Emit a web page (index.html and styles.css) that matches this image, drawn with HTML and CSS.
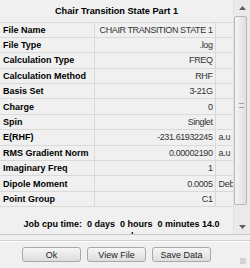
FILE: index.html
```html
<!DOCTYPE html>
<html lang="en">
<head>
    <meta charset="UTF-8" />
    <title>Chair Transition State Part 1</title>
    <link rel="stylesheet" href="styles.css">
</head>
<body>

    <div class="window">
        <!-- Scrolling summary area -->
        <div class="scroll-box">
            <div class="scroll-content">
                <table class="summary">
                    <colgroup>
                        <col class="col-key">
                        <col class="col-val">
                        <col class="col-unit">
                    </colgroup>
                    <tr class="title-row"><th colspan="3">Chair Transition State Part 1</th></tr>
                    <tr><td class="key">File Name</td><td class="val">CHAIR TRANSITION STATE 1</td><td class="unit"></td></tr>
                    <tr><td class="key">File Type</td><td class="val">.log</td><td class="unit"></td></tr>
                    <tr><td class="key">Calculation Type</td><td class="val">FREQ</td><td class="unit"></td></tr>
                    <tr><td class="key">Calculation Method</td><td class="val">RHF</td><td class="unit"></td></tr>
                    <tr><td class="key">Basis Set</td><td class="val">3-21G</td><td class="unit"></td></tr>
                    <tr><td class="key">Charge</td><td class="val">0</td><td class="unit"></td></tr>
                    <tr><td class="key">Spin</td><td class="val">Singlet</td><td class="unit"></td></tr>
                    <tr><td class="key">E(RHF)</td><td class="val">-231.61932245</td><td class="unit">a.u</td></tr>
                    <tr><td class="key">RMS Gradient Norm</td><td class="val">0.00002190</td><td class="unit">a.u</td></tr>
                    <tr><td class="key">Imaginary Freq</td><td class="val">1</td><td class="unit"></td></tr>
                    <tr><td class="key">Dipole Moment</td><td class="val">0.0005</td><td class="unit">Debye</td></tr>
                    <tr><td class="key">Point Group</td><td class="val">C1</td><td class="unit"></td></tr>
                </table>
                <p class="cpu-time">Job cpu time:&nbsp; 0 days&nbsp; 0 hours&nbsp; 0 minutes 14.0 seconds.</p>
            </div>

            <!-- Vertical scrollbar -->
            <div class="scrollbar">
                <div class="arrow">
                    <svg width="7" height="4" viewBox="0 0 7 4"><path d="M0 4 L3.5 0 L7 4 Z" fill="#606060"/></svg>
                </div>
                <div class="track"><div class="thumb"><span class="grip-lines"></span></div></div>
                <div class="arrow">
                    <svg width="7" height="4" viewBox="0 0 7 4"><path d="M0 0 L3.5 4 L7 0 Z" fill="#606060"/></svg>
                </div>
            </div>
        </div>

        <!-- Dialog buttons -->
        <div class="button-bar">
            <button>Ok</button>
            <button>View File</button>
            <button>Save Data</button>
        </div>
        <div class="size-grip"></div>
    </div>

</body>
</html>
```

FILE: styles.css
```css
* {
    margin: 0;
    padding: 0;
    box-sizing: border-box;
}

body {
    font-family: 'Liberation Sans', Arial, sans-serif;
    font-size: 9px;
    background: #f0f0f0;
    color: #000;
    width: 250px;
    height: 268px;
    overflow: hidden;
}

.window {
    position: relative;
    height: 268px;
    display: flex;
    flex-direction: column;
}

.scroll-box {
    display: flex;
    height: 235px;
    border-bottom: 1px solid #c8c8c8;
}

.scroll-content {
    width: 233px;
    overflow: hidden;
}

.summary {
    border-collapse: collapse;
    table-layout: fixed;
    width: 233px;
}

.col-key {
    width: 94px;
}

.col-val {
    width: 121px;
}

.col-unit {
    width: 18px;
}

.summary th {
    height: 22px;
    font-size: 9.2px;
    font-weight: bold;
    text-align: center;
    border-bottom: 1px solid #d9d9d9;
}

.summary td {
    height: 15.4px;
    border-bottom: 1px solid #d9d9d9;
    border-right: 1px solid #d9d9d9;
    white-space: nowrap;
    overflow: hidden;
}

.summary .key {
    padding-left: 3px;
    font-weight: bold;
}

.summary .val {
    padding-right: 2px;
    text-align: right;
    letter-spacing: -0.4px;
    color: #333;
}

.summary .unit {
    padding-left: 3px;
    letter-spacing: -0.2px;
    color: #333;
}

.cpu-time {
    margin-top: 11px;
    padding: 0 8px 0 18px;
    text-align: center;
    font-weight: bold;
    line-height: 12px;
}

.scrollbar {
    width: 17px;
    display: flex;
    flex-direction: column;
    background: #eaeaea;
    border-left: 1px solid #e2e2e2;
}

.arrow {
    height: 15px;
    display: flex;
    align-items: center;
    justify-content: center;
}

.track {
    flex: 1;
    padding: 1px 3px 4px 0;
}

.thumb {
    height: 189px;
    background: linear-gradient(to right, #f4f4f4, #e0e0e0);
    border: 1px solid #b8b8b8;
    border-radius: 2px;
    position: relative;
}

.grip-lines {
    position: absolute;
    left: 4px;
    top: 86px;
    width: 5px;
    height: 5px;
    border-top: 1px solid #a0a0a0;
    border-bottom: 1px solid #a0a0a0;
}

.button-bar {
    flex: 1;
    display: flex;
    gap: 6px;
    padding: 5px 0 0 22px;
    border-top: 1px solid #fff;
    margin-top: 6px;
    box-shadow: 0 -1px 0 #d0d0d0;
}

.button-bar button {
    width: 59px;
    height: 15px;
    font-family: inherit;
    font-size: 9px;
    color: #222;
    background: linear-gradient(to bottom, #f6f6f6, #dddddd);
    border: 1px solid #a8a8a8;
    border-radius: 3px;
}

.size-grip {
    position: absolute;
    right: 4px;
    bottom: 4px;
    width: 6px;
    height: 6px;
    background: radial-gradient(circle, #b0b0b0 0.6px, transparent 0.8px) 0 0 / 2px 2px;
}
```
